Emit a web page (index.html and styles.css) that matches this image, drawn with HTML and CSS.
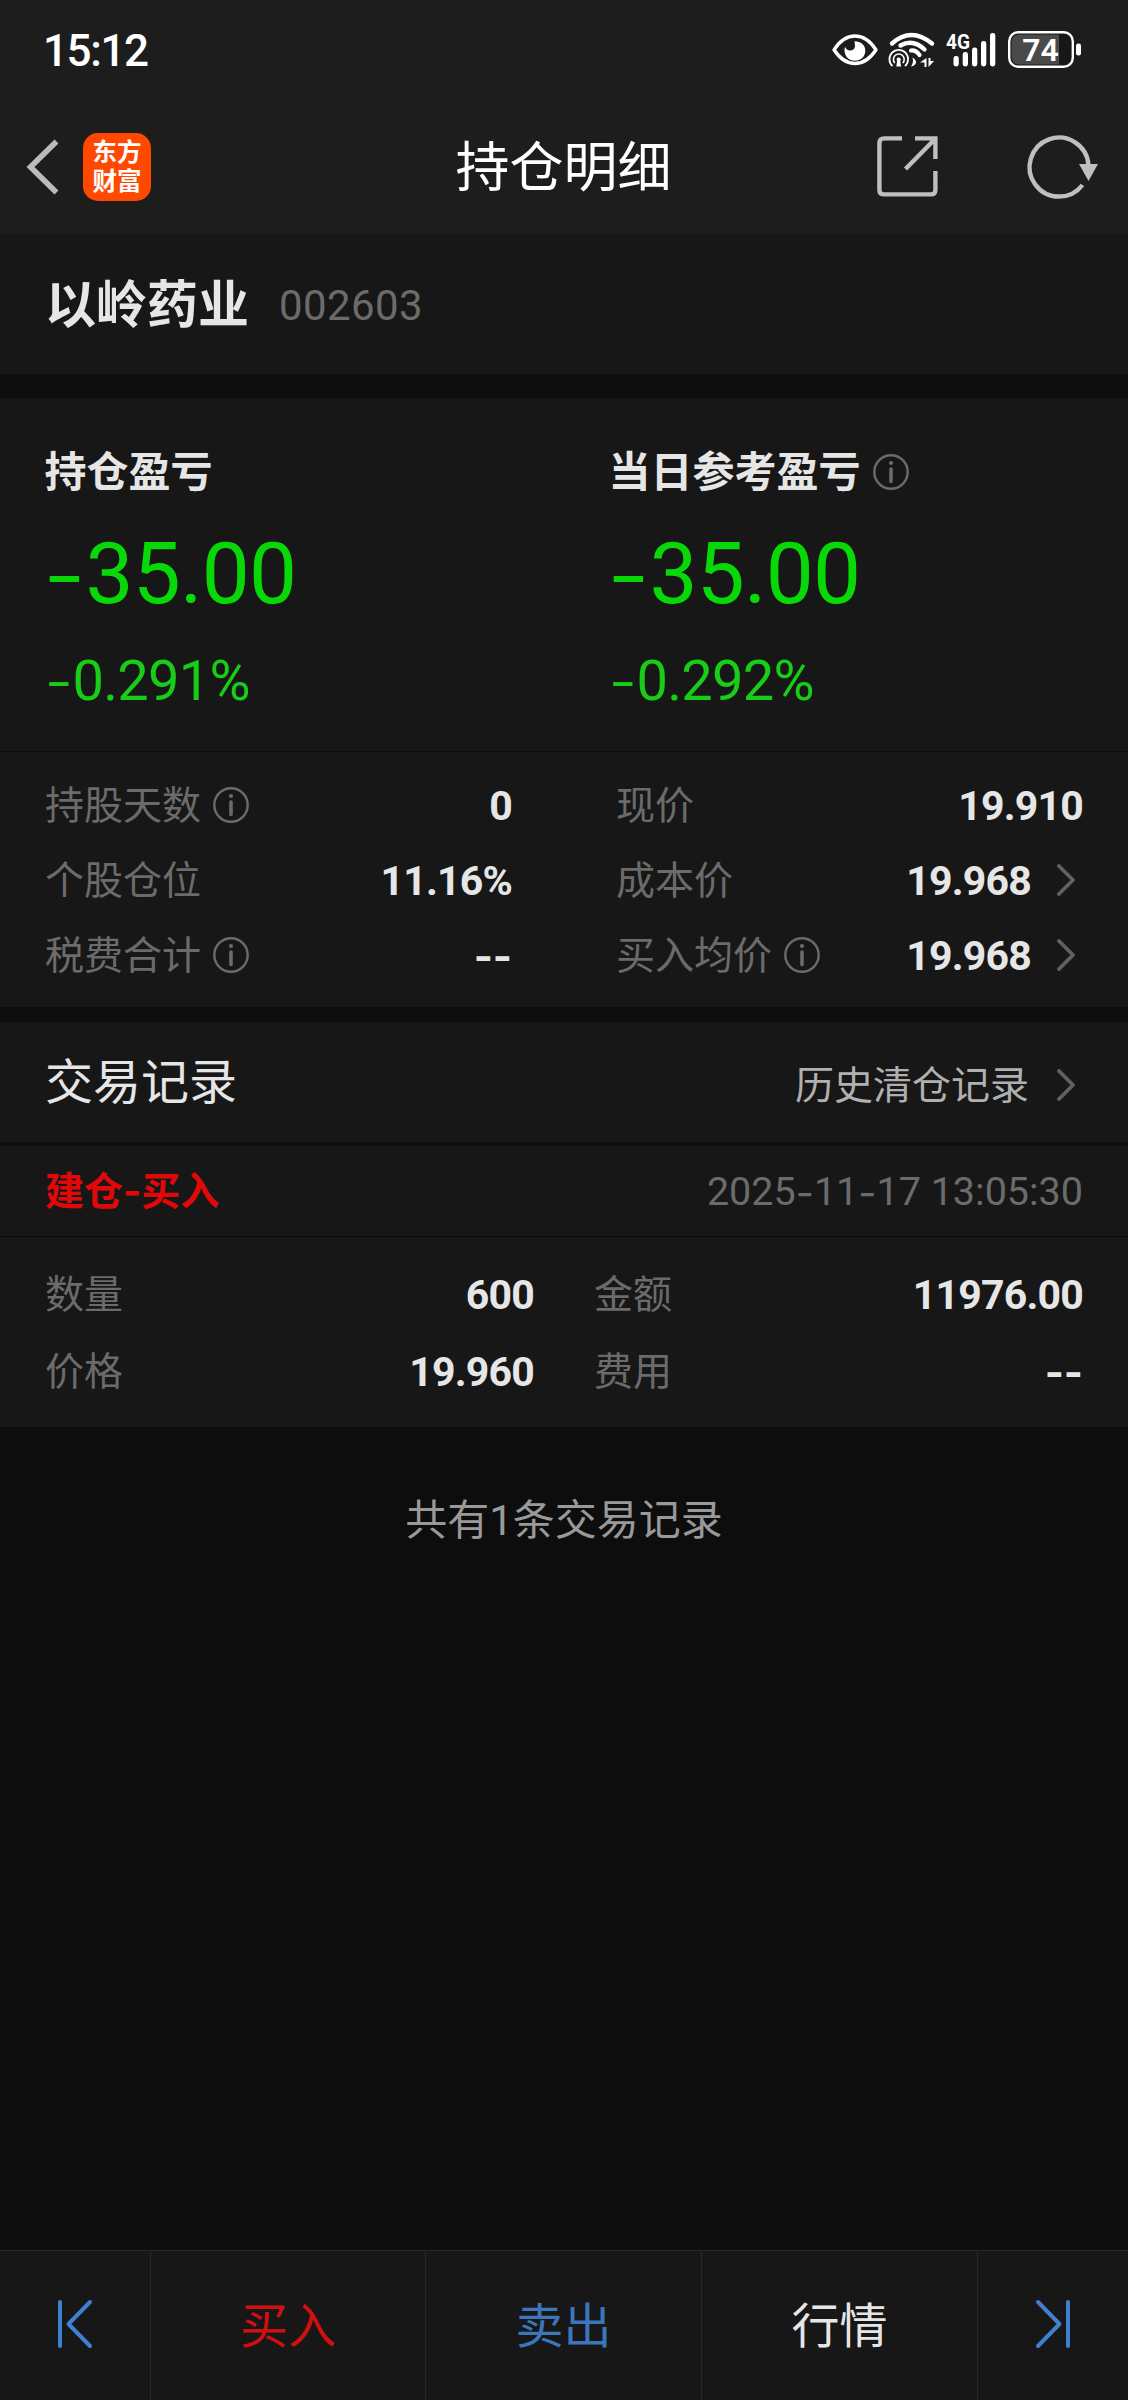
FILE: index.html
```html
<!DOCTYPE html>
<html lang="zh-CN">
<head>
<meta charset="utf-8">
<title>持仓明细</title>
<link rel="stylesheet" href="styles.css">
</head>
<body>
<svg width="0" height="0" class="defs">
  <symbol id="info" viewBox="0 0 36 36"><circle cx="18" cy="18" r="16.7" fill="none" stroke="currentColor" stroke-width="2.4"/><circle cx="18" cy="9" r="2.1" fill="currentColor"/><path d="M18 15v12.5" stroke="currentColor" stroke-width="3.6" stroke-linecap="round"/></symbol>
  <symbol id="chevron" viewBox="0 0 18 32"><path d="M2 2l14 14L2 30" fill="none" stroke="currentColor" stroke-width="3.8" stroke-linecap="round" stroke-linejoin="round"/></symbol>
</svg>
<div class="app">
  <header class="top">
    <div class="status">
      <span class="time">15:12</span>
      <div class="status-icons">
        <svg class="eye" width="46" height="32" viewBox="0 0 46 32"><path d="M2 15.8C8 6.500 15 2 23 2s15 4.500 21 13.800C38 25 31 29.500 23 29.500S8 25 2 15.800z" fill="none" stroke="#fff" stroke-width="3.4" stroke-linejoin="round"/><path d="M22.500 7.300c6.500 0 10.800 4 10.800 9.200 0 6-4.500 10.300-10.300 10.300-6.200 0-10.500-4.600-10.500-10.800 0-1.200.2-2.200.6-3.200 1 2.500 2.700 3.800 4.800 3.800 3.300 0 5.100-2 5.100-4.800 0-1.700-.4-3.200-.5-4.500z" fill="#fff"/></svg>
        <svg class="wifi" width="46" height="36" viewBox="0 0 46 36" fill="none" stroke="#fff"><path d="M4 11.500Q23-5.500 44 11.500" stroke-width="4.400" stroke-linecap="round"/><path d="M12.500 13.500Q25 6.500 36.500 17.500" stroke-width="4.400" stroke-linecap="round"/><path d="M23 18.500Q28 18 31.500 23" stroke-width="4.200" stroke-linecap="round"/><path d="M4.500 34a9.300 9.300 0 1 1 12.500 0" stroke-width="1.800"/><path d="M6.800 31a5.400 5.400 0 1 1 8 0" stroke-width="1.600"/><circle cx="10.700" cy="27.500" r="2.100" fill="#fff" stroke="none"/><path d="M9.300 28h2.800l1 6.500H8.300z" fill="#fff" stroke="none"/><path d="M24.500 25.500q5 3 3 6.500-1.500 2-4.500 2.500 3-4 1.500-9zM38.500 26v9h-2v-4.500h-4.500zM40.500 26v9l5.500-6h-3.500v-3z" fill="#fff" stroke="none"/></svg>
        <svg class="signal" width="50" height="36" viewBox="0 0 50 36"><text x="0" y="17" class="net" textLength="24" lengthAdjust="spacingAndGlyphs">4G</text><g fill="#fff"><rect x="7.500" y="24" width="5.300" height="10.500" rx="2.400"/><rect x="16.700" y="20" width="5.300" height="14.500" rx="2.400"/><rect x="26" y="15.500" width="5.300" height="19" rx="2.400"/><rect x="35" y="9" width="5.300" height="25.500" rx="2.400"/><rect x="44" y="1" width="5.300" height="33.500" rx="2.400"/></g></svg>
        <svg class="battery" width="73" height="37" viewBox="0 0 73 37"><rect x="1.200" y="1.200" width="63.600" height="34.600" rx="9" fill="#171717" stroke="#fff" stroke-width="2.400"/><path d="M10.500 3.500H51v30H10.500a7 7 0 0 1-7-7v-16a7 7 0 0 1 7-7z" fill="#4a4a4a"/><rect x="68" y="12.500" width="5" height="12" rx="2.300" fill="#fff"/><text x="32.500" y="30" class="pct" text-anchor="middle">74</text></svg>
      </div>
    </div>
    <nav class="nav">
      <div class="nav-left">
        <svg width="34" height="58" viewBox="0 0 34 58"><path d="M30.500 3.500L4.500 29l26 25.500" fill="none" stroke="#bbb" stroke-width="5.600"/></svg>
        <div class="logo"><span>东方</span><span>财富</span></div>
      </div>
      <h1>持仓明细</h1>
      <div class="nav-right">
        <svg width="61" height="61" viewBox="0 0 61 61" fill="none" stroke="#bfbfbf" stroke-width="4.400"><path d="M25 2.400H7Q2.400 2.400 2.400 7v47q0 4.400 4.600 4.400h47q4.400 0 4.400-4.400V35M38 2.400h20.400V23M58 3L28.500 33"/></svg>
        <svg width="72" height="64" viewBox="0 0 72 64"><path d="M55.500 50A29.500 29.500 0 1 1 61.500 30" fill="none" stroke="#bfbfbf" stroke-width="4.400"/><path d="M52 29h19L61.500 46z" fill="#bfbfbf"/></svg>
      </div>
    </nav>
  </header>

  <section class="stock"><b>以岭药业</b><span>002603</span></section>

  <section class="profit">
    <div class="profit-col"><h2>持仓盈亏</h2><p class="amount"><i class="dash">-</i>35.00</p><p class="rate"><i class="dash">-</i>0.291%</p></div>
    <div class="profit-col"><h2>当日参考盈亏<svg class="info"><use href="#info"/></svg></h2><p class="amount"><i class="dash">-</i>35.00</p><p class="rate"><i class="dash">-</i>0.292%</p></div>
  </section>

  <section class="stats">
    <div class="row"><span>持股天数</span><svg class="info"><use href="#info"/></svg><b>0</b></div>
    <div class="row"><span>现价</span><b>19.910</b></div>
    <div class="row"><span>个股仓位</span><b>11.16%</b></div>
    <div class="row"><span>成本价</span><b>19.968</b><svg class="chev"><use href="#chevron"/></svg></div>
    <div class="row"><span>税费合计</span><svg class="info"><use href="#info"/></svg><b><i class="dash">-</i><i class="dash">-</i></b></div>
    <div class="row"><span>买入均价</span><svg class="info"><use href="#info"/></svg><b>19.968</b><svg class="chev"><use href="#chevron"/></svg></div>
  </section>

  <section class="records-head"><h3>交易记录</h3><a>历史清仓记录<svg class="chev"><use href="#chevron"/></svg></a></section>

  <section class="record">
    <div class="record-head"><strong>建仓<i class="dash">-</i>买入</strong><time>2025<i class="dash">-</i>11<i class="dash">-</i>17 13:05:30</time></div>
    <div class="record-body">
      <div class="row"><span>数量</span><b>600</b></div>
      <div class="row"><span>金额</span><b>11976.00</b></div>
      <div class="row"><span>价格</span><b>19.960</b></div>
      <div class="row"><span>费用</span><b><i class="dash">-</i><i class="dash">-</i></b></div>
    </div>
  </section>

  <p class="total">共有1条交易记录</p>

  <footer class="actions">
    <div><svg width="34" height="48" viewBox="0 0 34 48"><path d="M2 2v44M32 2L10.500 24 32 46" fill="none" stroke="#4080d0" stroke-width="4" stroke-linecap="round" stroke-linejoin="round"/></svg></div>
    <div class="buy">买入</div>
    <div class="sell">卖出</div>
    <div class="quote">行情</div>
    <div><svg width="34" height="48" viewBox="0 0 34 48"><path d="M32 2v44M2 2l21.500 22L2 46" fill="none" stroke="#4080d0" stroke-width="4" stroke-linecap="round" stroke-linejoin="round"/></svg></div>
  </footer>
</div>
</body>
</html>
```
FILE: styles.css
```css
* { box-sizing: border-box; margin: 0; padding: 0; }
body { background: #0d0d0d; color: #e6e6e6; font-family: Roboto, "Noto Sans CJK SC", sans-serif; }
svg { display: block; flex: none; overflow: visible; }
.defs { position: absolute; }
.app { display: flex; flex-direction: column; width: 1128px; height: 2400px; }
.app > * { flex: none; }

.top { height: 234px; background: #1d1d1d; }
.status { display: flex; justify-content: space-between; height: 100px; padding: 0 47px 0 43px; color: #fff; }
.time { margin-top: 21px; font-size: 44px; line-height: 60px; font-weight: 500; letter-spacing: -1.400px; }
.status-icons { display: flex; align-items: flex-start; padding-top: 31px; }
.eye { margin: 3px 10px 0 0; }
.wifi { margin: 1px 12px 0 0; }
.signal { margin: 1px 12px 0 0; }
.net { font-size: 21px; font-weight: 700; fill: #fff; }
.pct { font-size: 32px; font-weight: 600; fill: #fff; }

.nav { display: grid; grid-template-columns: 1fr auto 1fr; align-items: center; height: 134px; padding: 0 29px 0 26px; }
.nav-left { display: flex; align-items: center; gap: 23px; }
.logo { display: flex; flex-direction: column; align-items: center; justify-content: center; width: 68px; height: 68px; border-radius: 15px; background: #ff4800; color: #fff; font-size: 24.500px; line-height: 29px; font-weight: 700; }
h1 { padding: 4px 0 0 2px; color: #fff; font-size: 54px; line-height: 70px; font-weight: 400; }
.nav-right { display: flex; align-items: center; justify-content: flex-end; gap: 89px; padding-bottom: 1px; }

.stock { display: flex; align-items: center; height: 140px; padding: 3px 0 0 45px; gap: 30px; background: #171717; }
.stock b { font-size: 51px; line-height: 70px; }
.stock span { font-size: 42px; line-height: 60px; letter-spacing: .4px; color: #6b6b6b; }

.profit { display: grid; grid-template-columns: 1fr 1fr; height: 354px; margin-top: 24px; padding-top: 45px; background: #171717; border-bottom: 1px solid #0d0d0d; }
.profit-col { padding-left: 44.500px; }
h2 { display: flex; align-items: center; font-size: 42px; line-height: 60px; font-weight: 700; }
.info { width: 36px; height: 36px; margin: 0 0 2px 12px; color: #6b6b6b; }
.amount { margin-top: 21px; color: #08d808; font-size: 85.500px; line-height: 100px; letter-spacing: -.8px; }
.rate { margin-top: 27px; color: #18cc18; font-size: 56px; line-height: 60px; letter-spacing: -.7px; }
.dash { font-family: Inter, sans-serif; font-style: normal; line-height: 0; }
.amount .dash, .rate .dash { font-size: 1.13em; font-weight: 300; vertical-align: -.06em; }
.amount .dash { margin-left: -2px; }

.stats { display: grid; grid-template-columns: 467px 467px; grid-auto-rows: 75px; justify-content: space-between; height: 255px; padding: 16px 45px 0; background: #171717; }
.row { display: flex; align-items: center; font-size: 39px; line-height: 56px; }
.row span { color: #6b6b6b; }
.row b { margin-left: auto; font-size: 41px; letter-spacing: -.8px; }
.row b .dash { letter-spacing: 0; vertical-align: -.02em; }
.chev { width: 18px; height: 32px; margin: 0 8px 2px 26px; color: #616161; }

.records-head { display: flex; align-items: center; justify-content: space-between; height: 120px; margin-top: 15px; padding: 2px 45px 0; background: #171717; }
h3 { font-size: 48px; line-height: 64px; font-weight: 400; }
.records-head a { display: flex; align-items: center; padding-top: 5px; font-size: 39px; line-height: 56px; color: #b0b0b0; }
.records-head .chev { margin-left: 28px; }

.record { height: 281px; margin-top: 4px; background: #171717; }
.record-head { display: flex; align-items: center; justify-content: space-between; height: 91px; padding: 1px 45px 0; border-bottom: 1px solid #0d0d0d; font-size: 39px; line-height: 56px; }
.record-head strong { color: #e00808; }
.record-head time { color: #6b6b6b; font-size: 39.500px; }
.record-head time .dash { vertical-align: -.05em; }
.record-body { display: grid; grid-template-columns: 489px 489px; grid-auto-rows: 77px; justify-content: space-between; padding: 19px 45px 0; }

.total { margin-top: 64px; text-align: center; font-size: 42px; line-height: 60px; color: #999; }

.actions { display: grid; grid-template-columns: 151px 275px 276px 276px 150px; height: 150px; margin-top: auto; background: #171717; border-top: 1px solid #282828; font-size: 48px; line-height: 64px; }
.actions div { display: flex; align-items: center; justify-content: center; padding-top: 3px; border-right: 1px solid #282828; }
.actions div:first-child, .actions div:last-child { padding: 0 0 4px; }
.actions div:last-child { border-right: 0; }
.buy { color: #d01010; }
.sell { color: #3b76bd; }
```
